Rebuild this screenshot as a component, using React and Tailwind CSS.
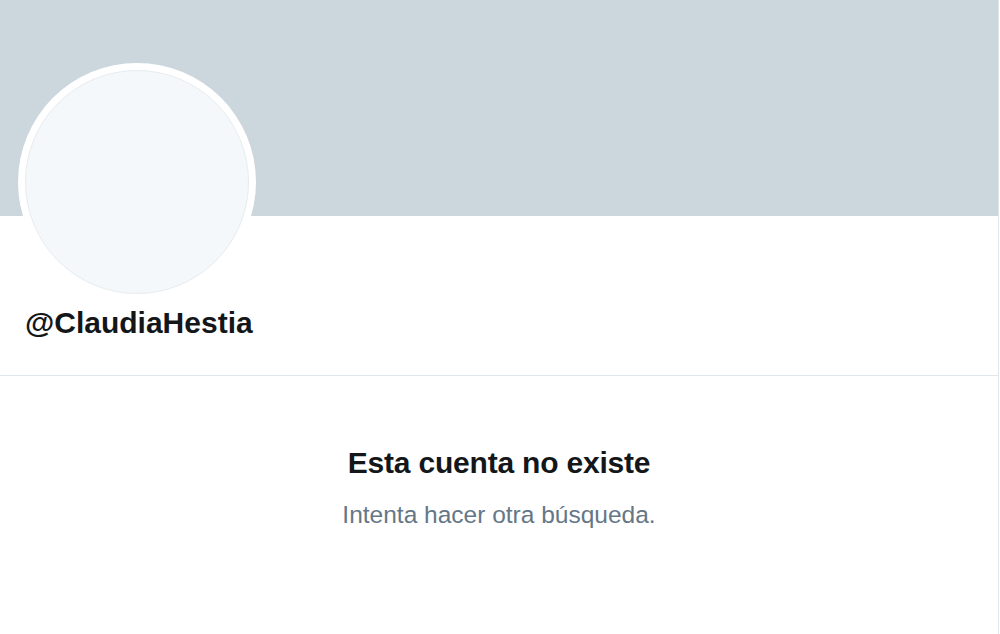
export default function App() {
  return (
    <div className="w-[1000px] h-[634px] bg-white overflow-hidden" style={{ fontFamily: '"Liberation Sans", Arial, sans-serif' }}>
      <div className="w-[999px] h-full border-r border-[#e1e8ed]">
        <div className="h-[216px] bg-[#ccd6dd]" />
        <div className="flex flex-col px-[18px] border-b border-[#e1e8ed] h-[160px]">
          <div className="-mt-[153px] w-[238px] h-[238px] shrink-0 rounded-full bg-white p-[7px]">
            <div className="w-full h-full rounded-full bg-[#f5f8fa] border border-[#e6ecf0]" />
          </div>
          <div className="mt-[4px] pl-[7px] text-[30px] leading-[36px] font-bold text-[#14171a]">@ClaudiaHestia</div>
        </div>
        <div className="flex flex-col items-center pt-[69px]">
          <div className="text-[30px] leading-[36px] font-bold text-[#14171a] tracking-[-0.2px]">Esta cuenta no existe</div>
          <div className="mt-[19px] text-[24.5px] leading-[30px] text-[#657786]">Intenta hacer otra búsqueda.</div>
        </div>
      </div>
    </div>
  );
}
